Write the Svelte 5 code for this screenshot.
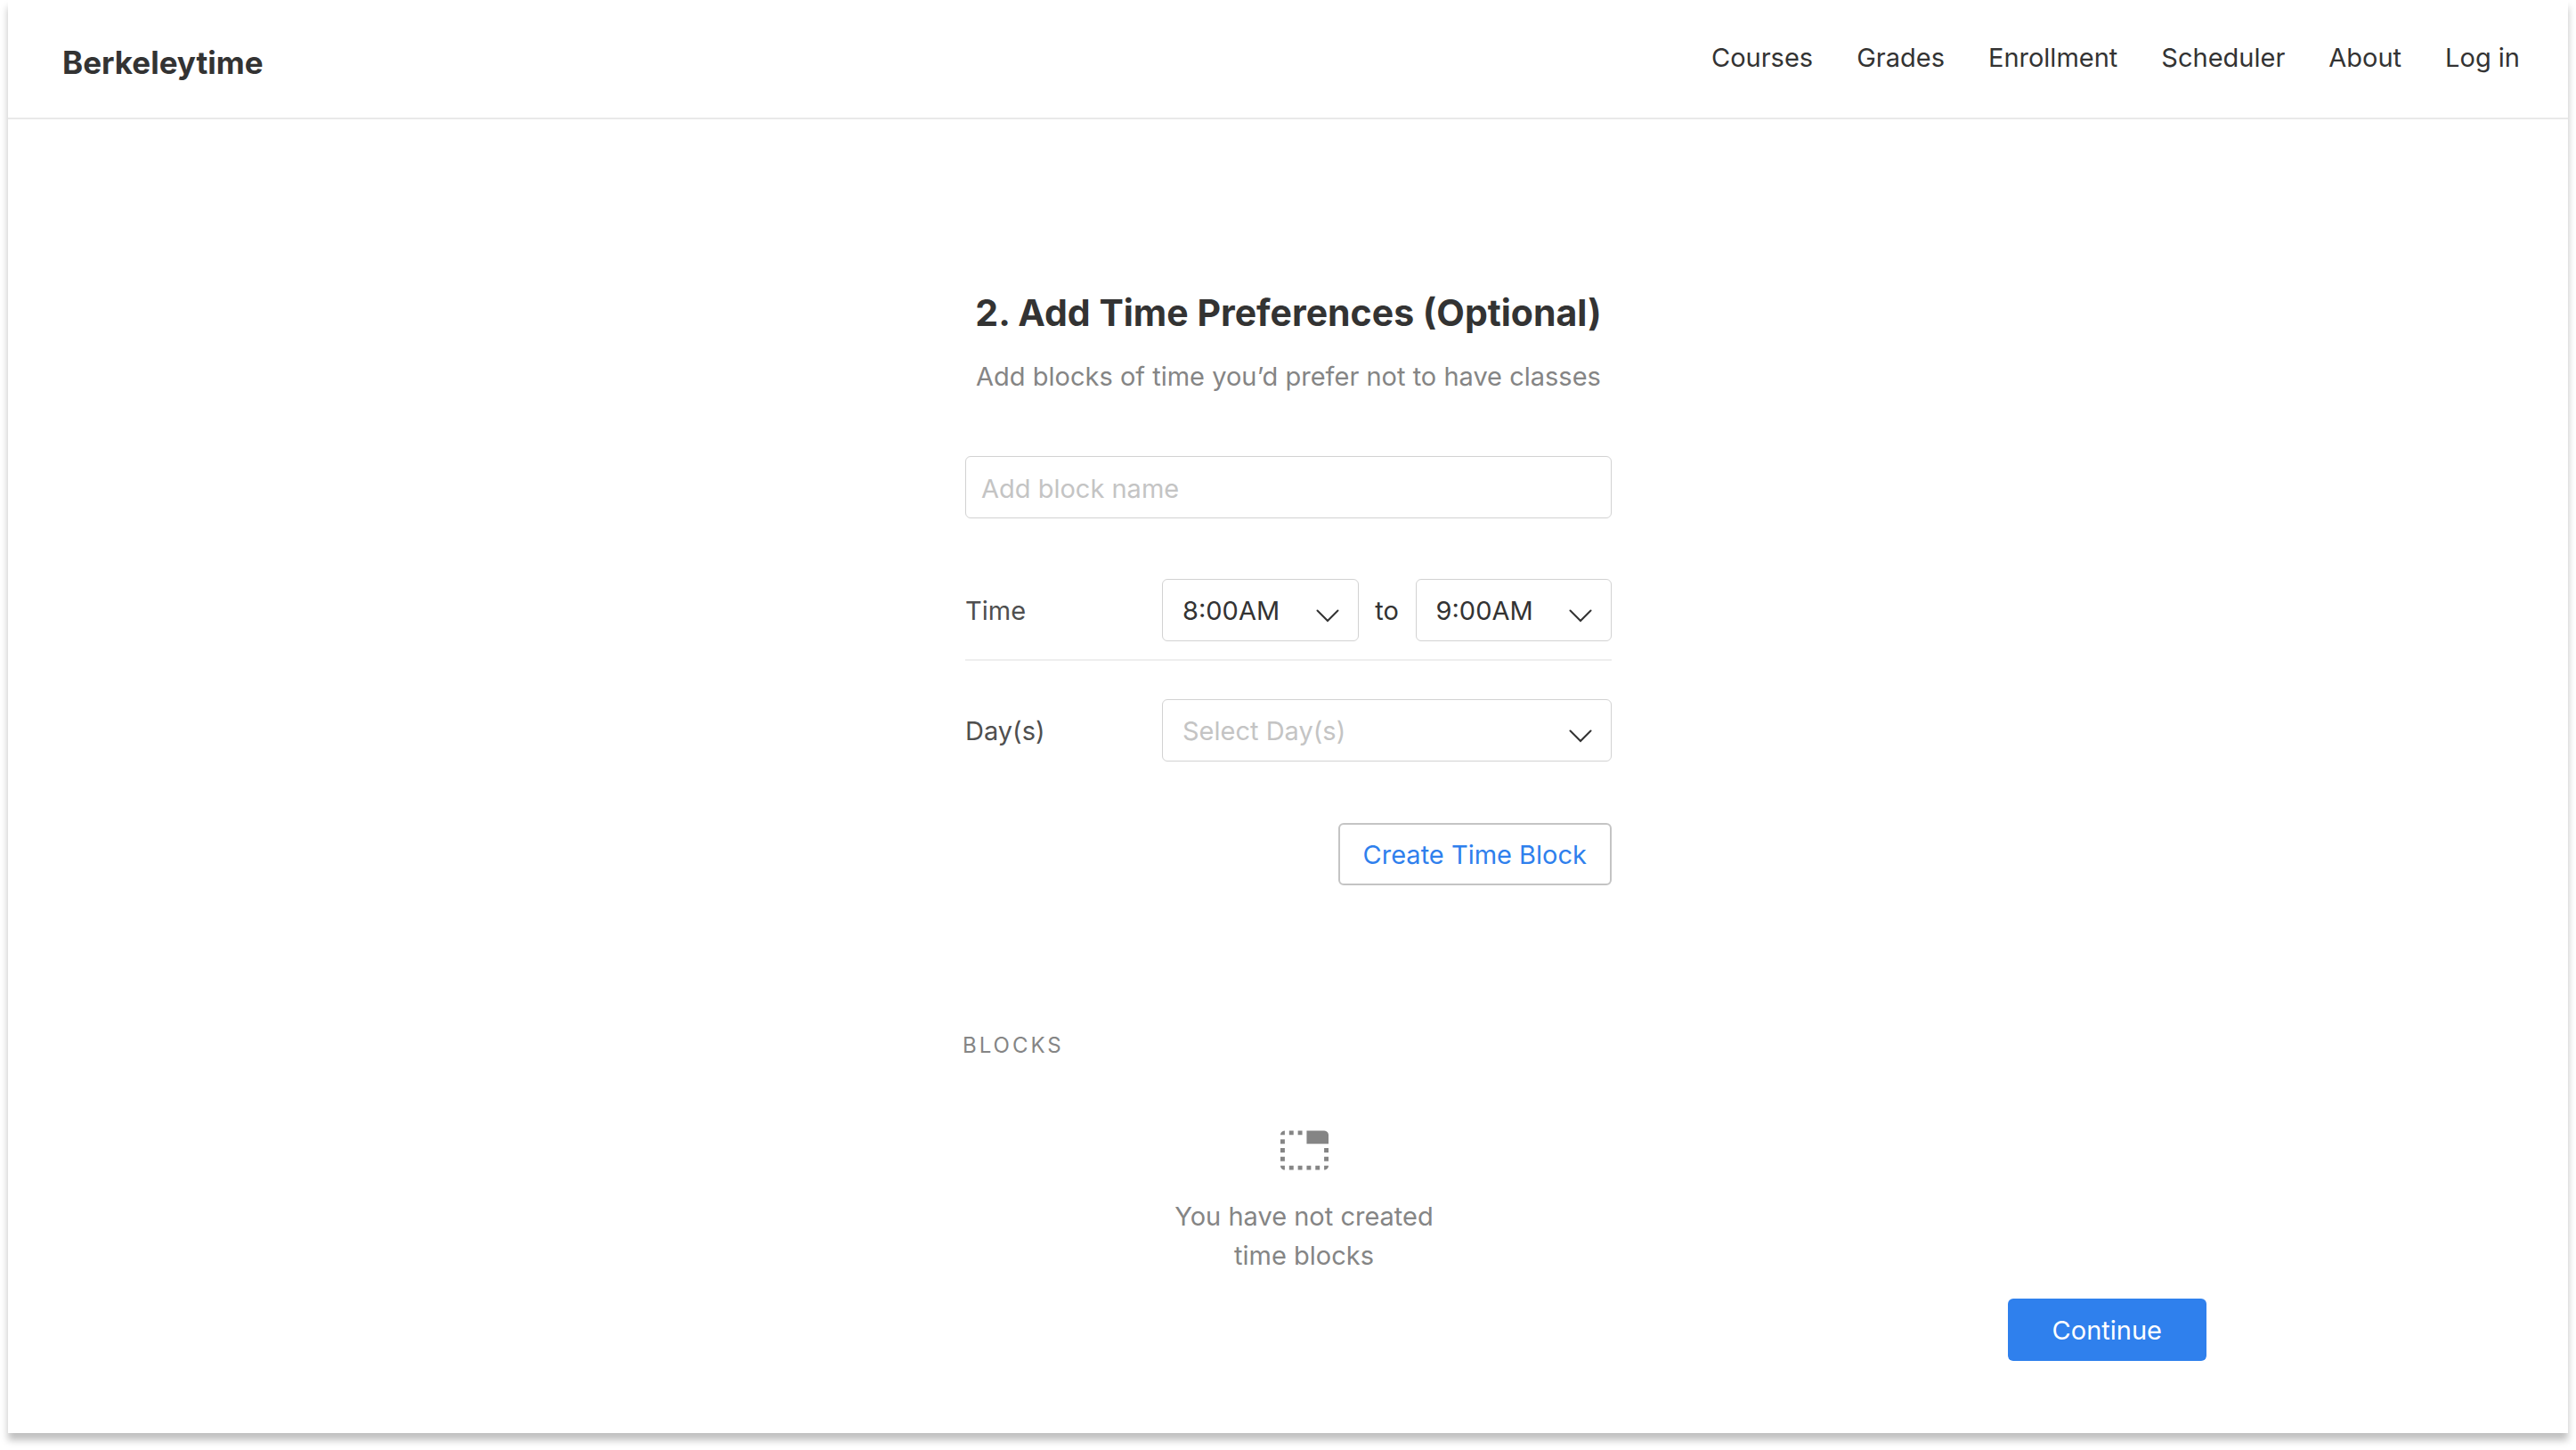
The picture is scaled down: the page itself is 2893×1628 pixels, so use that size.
<script>
  const links = ['Courses', 'Grades', 'Enrollment', 'Scheduler', 'About', 'Log in'];
  const times = ['8:00AM', '9:00AM', '10:00AM', '11:00AM', '12:00PM', '1:00PM', '2:00PM', '3:00PM', '4:00PM', '5:00PM'];
  const days = ['Monday', 'Tuesday', 'Wednesday', 'Thursday', 'Friday'];

  let name = $state('');
  let start = $state('8:00AM');
  let end = $state('9:00AM');
  let day = $state('');
</script>

{#snippet chevron()}
  <svg class="chevron" viewBox="0 0 26 15" aria-hidden="true">
    <path d="M1.5 1.5 13 13 24.5 1.5" />
  </svg>
{/snippet}

<div class="page">
  <div class="card">
    <header>
      <a class="brand" href="#home">Berkeleytime</a>
      <nav>
        {#each links as link}
          <a href="#{link.toLowerCase().replace(' ', '-')}">{link}</a>
        {/each}
      </nav>
    </header>

    <main>
      <div class="column">
        <h1>2. Add Time Preferences (Optional)</h1>
        <p class="subtitle">Add blocks of time you’d prefer not to have classes</p>

        <form onsubmit={(e) => e.preventDefault()}>
          <input class="field name" type="text" placeholder="Add block name" aria-label="Block name" bind:value={name} />

          <div class="row time">
            <label for="start">Time</label>
            <div class="select">
              <select id="start" class="field" bind:value={start}>
                {#each times as time}<option>{time}</option>{/each}
              </select>
              {@render chevron()}
            </div>
            <label class="to" for="end">to</label>
            <div class="select">
              <select id="end" class="field" bind:value={end}>
                {#each times as time}<option>{time}</option>{/each}
              </select>
              {@render chevron()}
            </div>
          </div>

          <div class="row">
            <label for="days">Day(s)</label>
            <div class="select wide">
              <select id="days" class="field" class:empty={!day} bind:value={day}>
                <option value="" disabled>Select Day(s)</option>
                {#each days as d}<option>{d}</option>{/each}
              </select>
              {@render chevron()}
            </div>
          </div>

          <button class="create" type="submit">Create Time Block</button>
        </form>

        <section>
          <h2>BLOCKS</h2>
          <div class="none">
            <svg viewBox="1 3 22 18" aria-hidden="true">
              <path d="M1 9h2V7H1v2zm0 4h2v-2H1v2zm0-8h2V3c-1.1 0-2 .9-2 2zm8 16h2v-2H9v2zm-8-4h2v-2H1v2zm2 4v-2H1c0 1.1.9 2 2 2zM21 3h-8v6h10V5c0-1.1-.9-2-2-2zm0 14h2v-2h-2v2zM9 5h2V3H9v2zM5 21h2v-2H5v2zM5 5h2V3H5v2zm16 16c1.1 0 2-.9 2-2h-2v2zm0-8h2v-2h-2v2zm-8 8h2v-2h-2v2zm4 0h2v-2h-2v2z" />
            </svg>
            <p>You have not created<br />time blocks</p>
          </div>
        </section>
      </div>
    </main>

    <footer>
      <button class="continue" type="button">Continue</button>
    </footer>
  </div>
</div>

<style>
  :global(body) {
    background: #fff;
  }

  .page {
    box-sizing: border-box;
    min-height: 100vh;
    display: flex;
    padding: 0 9px 19px;
    font: 400 29px/44px Inter, 'Liberation Sans', sans-serif;
    color: #333;
  }

  .card {
    flex: 1;
    display: flex;
    flex-direction: column;
    background: #fff;
    box-shadow: 0 8px 8px rgba(0, 0, 0, 0.25);
  }

  header {
    display: flex;
    justify-content: space-between;
    align-items: flex-start;
    padding: 43px 54px 35px 61px;
    border-bottom: 2px solid #e9e9e9;
  }

  a {
    color: inherit;
    text-decoration: none;
  }

  .brand {
    font-size: 35px;
    font-weight: 700;
    line-height: 54px;
  }

  nav {
    display: flex;
    flex-wrap: wrap;
    gap: 0 49px;
  }

  main {
    display: flex;
    justify-content: center;
    padding: 189px 24px 26px 25px;
  }

  .column {
    width: 726px;
  }

  h1,
  h2,
  p {
    margin: 0;
  }

  h1 {
    font-size: 41px;
    font-weight: 700;
    line-height: 56px;
    text-align: center;
    white-space: nowrap;
  }

  .subtitle {
    margin: 22px 0 67px;
    text-align: center;
    white-space: nowrap;
    color: #858585;
  }

  form {
    display: flex;
    flex-direction: column;
  }

  .field {
    box-sizing: border-box;
    width: 100%;
    height: 70px;
    margin: 0;
    padding: 2px 22px 0;
    border: 1px solid #d2d2d2;
    border-radius: 6px;
    background: #fff;
    font: inherit;
    color: inherit;
    appearance: none;
    display: block;
  }

  .name {
    padding: 2px 17px 0;
    margin-bottom: 68px;
  }

  .name::placeholder {
    color: #c4c4c4;
    opacity: 1;
  }

  .empty {
    color: #c4c4c4;
  }

  option {
    color: #333;
  }

  .row {
    display: grid;
    grid-template-columns: 221px 1fr 64px 1fr;
    align-items: center;
  }

  .time {
    padding-bottom: 20px;
    margin-bottom: 43px;
    border-bottom: 2px solid #eee;
  }

  label {
    padding-top: 2px;
    color: #4f4f4f;
  }

  .to {
    text-align: center;
    color: inherit;
  }

  .select {
    position: relative;
  }

  .wide {
    grid-column: 2 / -1;
  }

  .chevron {
    position: absolute;
    right: 22px;
    top: 34px;
    width: 26px;
    height: 15px;
    fill: none;
    stroke: #333;
    stroke-width: 2;
    stroke-linecap: round;
    pointer-events: none;
  }

  button {
    height: 70px;
    border-radius: 6px;
    font: inherit;
    cursor: pointer;
  }

  .create {
    align-self: flex-end;
    margin-top: 69px;
    padding: 2px 26px 0;
    border: 2px solid #c4c4c4;
    background: #fff;
    color: #2f80ed;
  }

  section {
    margin: 165px 0 0 -3px;
  }

  h2 {
    font-size: 24px;
    font-weight: 400;
    line-height: 30px;
    letter-spacing: 3px;
    color: #858585;
  }

  .none {
    display: flex;
    flex-direction: column;
    align-items: center;
    gap: 30px;
    margin-top: 80px;
    padding-left: 38px;
    text-align: center;
    color: #858585;
  }

  .none svg {
    width: 54px;
    height: 45px;
    fill: currentColor;
  }

  footer {
    display: flex;
    justify-content: flex-end;
    padding: 0 406px 81px 24px;
  }

  .continue {
    padding: 2px 50px 0;
    border: 0;
    background: #2f80ed;
    color: #fff;
  }
</style>
